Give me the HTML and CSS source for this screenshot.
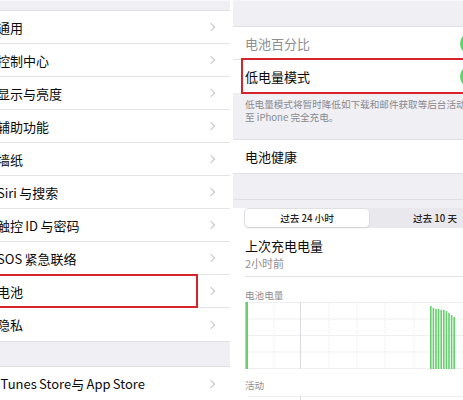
FILE: index.html
```html
<!DOCTYPE html>
<html lang="zh-CN">
<head>
  <meta charset="UTF-8">
  <meta name="viewport" content="width=device-width, initial-scale=1.0">
  <title>设置 - 电池</title>
  <link rel="stylesheet" href="styles.css">
</head>
<body>
  <div class="screen">
    <!-- settings list -->
    <div class="panel panel-left">
      <div class="band band-top"></div>
      <div class="group">
        <div class="row"><span class="label">通用</span><span class="chev"></span></div>
        <div class="row"><span class="label">控制中心</span><span class="chev"></span></div>
        <div class="row"><span class="label">显示与亮度</span><span class="chev"></span></div>
        <div class="row"><span class="label">辅助功能</span><span class="chev"></span></div>
        <div class="row"><span class="label">墙纸</span><span class="chev"></span></div>
        <div class="row"><span class="label">Siri 与搜索</span><span class="chev"></span></div>
        <div class="row"><span class="label">触控 ID 与密码</span><span class="chev"></span></div>
        <div class="row"><span class="label">SOS 紧急联络</span><span class="chev"></span></div>
        <div class="row row-marked"><span class="label">电池</span><span class="chev"></span><div class="mark mark-left"></div></div>
        <div class="row"><span class="label">隐私</span><span class="chev"></span></div>
      </div>
      <div class="band band-mid"></div>
      <div class="group">
        <div class="row"><span class="label">iTunes Store与 App Store</span><span class="chev"></span></div>
      </div>
    </div>

    <!-- battery page -->
    <div class="panel panel-right">
      <div class="band band-right-top"></div>
      <div class="group">
        <div class="row row-r"><span class="label label-dim">电池百分比</span><span class="switch"></span></div>
        <div class="row row-r row-marked"><span class="label">低电量模式</span><span class="switch"></span><div class="mark mark-right"></div></div>
      </div>
      <div class="footnote">低电量模式将暂时降低如下载和邮件获取等后台活动，直<br>至 iPhone 完全充电。</div>
      <div class="group">
        <div class="row row-r"><span class="label">电池健康</span></div>
      </div>
      <div class="band band-gap"></div>
      <div class="usage">
        <div class="segmented">
          <div class="seg seg-on">过去 24 小时</div>
          <div class="seg">过去 10 天</div>
        </div>
        <div class="usage-head">
          <div class="usage-title">上次充电电量</div>
          <div class="usage-sub">2小时前</div>
        </div>
        <div class="chart-label">电池电量</div>
        <svg class="chart" width="218" height="67" viewBox="0 0 218 67">
          <g stroke="#efeff1" stroke-width="1">
            <line x1="3" y1="0.5" x2="218" y2="0.5"/>
            <line x1="3" y1="17" x2="218" y2="17"/>
            <line x1="3" y1="33.5" x2="218" y2="33.5"/>
            <line x1="3" y1="50" x2="218" y2="50"/>
            <line x1="3" y1="66.5" x2="218" y2="66.5"/>
          </g>
          <g stroke="#efeff1" stroke-width="1" stroke-dasharray="2 1">
            <line x1="29" y1="0" x2="29" y2="67"/>
            <line x1="84" y1="0" x2="84" y2="67"/>
            <line x1="112" y1="0" x2="112" y2="67"/>
            <line x1="140" y1="0" x2="140" y2="67"/>
            <line x1="169" y1="0" x2="169" y2="67"/>
            <line x1="197" y1="0" x2="197" y2="67"/>
          </g>
          <line x1="55.5" y1="0" x2="55.5" y2="67" stroke="#dadade" stroke-width="1"/>
          <g fill="#66cf6d">
            <rect x="0.4" y="0" width="2.6" height="67"/>
            <rect x="185" y="4" width="1.6" height="63"/>
            <rect x="187.6" y="6" width="1.6" height="61"/>
            <rect x="190.2" y="7" width="1.6" height="60"/>
            <rect x="192.8" y="7" width="1.6" height="60"/>
            <rect x="195.4" y="8" width="1.6" height="59"/>
            <rect x="198" y="8" width="1.6" height="59"/>
            <rect x="200.6" y="9" width="1.6" height="58"/>
            <rect x="203.2" y="11" width="1.6" height="56"/>
            <rect x="205.8" y="13" width="1.6" height="54"/>
            <rect x="208.4" y="15" width="1.6" height="52"/>
          </g>
        </svg>
        <div class="chart-label chart-label-2">活动</div>
        <svg class="chart" width="218" height="8" viewBox="0 0 218 8">
          <line x1="3" y1="4.5" x2="218" y2="4.5" stroke="#efeff1" stroke-width="1"/>
          <line x1="55.5" y1="4" x2="55.5" y2="8" stroke="#dadade" stroke-width="1"/>
        </svg>
      </div>
    </div>
  </div>
</body>
</html>
```

FILE: styles.css
```css
body {
  margin: 0;
  background-color: #fff;
  font-family: "Noto Sans CJK SC", "Noto Sans", sans-serif;
  color: #0a0a0a;
}

.screen {
  display: flex;
  gap: 3px;
  width: 463px;
  height: 400px;
  overflow: hidden;
}

.panel {
  height: 400px;
  overflow: hidden;
  background-color: #efeff4;
}

.panel-left {
  width: 230px;
  flex: none;
}

.panel-right {
  flex: 1;
  min-width: 0;
}

.band {
  box-sizing: border-box;
  border-bottom: 1px solid #e0e0e4;
}

.band-top {
  height: 11px;
  border-top: 1px solid #f8f8fa;
}

.band-mid {
  height: 26px;
  border-top: 1px solid #e0e0e4;
}

.band-right-top {
  height: 27px;
  border-top: 1px solid #f8f8fa;
}

.band-gap {
  height: 27px;
  border-top: 1px solid #e0e0e4;
}

.group {
  background-color: #fff;
}

.row {
  position: relative;
  box-sizing: border-box;
  display: flex;
  align-items: center;
  justify-content: space-between;
  height: 33px;
  padding-right: 14px;
  border-bottom: 1px solid #e3e3e6;
  font-size: 13px;
}

.row:last-child {
  border-bottom: none;
}

.label {
  margin-left: -3px;
  white-space: nowrap;
  word-spacing: -0.6px;
}

.chev {
  width: 5px;
  height: 5px;
  margin-right: 2px;
  border-top: 1.3px solid #c5c5ca;
  border-right: 1.3px solid #c5c5ca;
  transform: rotate(45deg);
}

.row-r {
  padding-left: 12px;
  padding-right: 0;
}

.row-r .label {
  margin-left: 0;
}

.label-dim {
  color: #8e8e93;
}

.switch {
  flex: none;
  width: 38px;
  height: 23px;
  margin-right: -35px;
  border-radius: 12px;
  background-color: #5bd66a;
}

.mark {
  position: absolute;
  top: -1px;
  bottom: -1px;
  box-sizing: border-box;
  border: 2px solid #d7232b;
}

.mark-left {
  left: -4px;
  width: 202px;
}

.mark-right {
  top: -2px;
  left: 8px;
  right: -6px;
}

.footnote {
  box-sizing: border-box;
  height: 47px;
  padding: 5px 0 0 12px;
  border-bottom: 1px solid #e0e0e4;
  font-size: 9.6px;
  line-height: 13px;
  color: #8a8a8f;
  white-space: nowrap;
}

.usage {
  height: 200px;
  padding-left: 12px;
  background-color: #fff;
}

.segmented {
  display: flex;
  width: 258px;
  height: 20px;
  margin: 8px 0 0 -1px;
  padding: 1px;
  box-sizing: border-box;
  border-radius: 5px;
  background-color: #e8e8ed;
}

.seg {
  flex: 1;
  display: flex;
  align-items: center;
  justify-content: center;
  font-size: 9.6px;
  font-weight: 500;
  color: #222;
}

.seg-on {
  flex: none;
  width: 124px;
  border-radius: 4px;
  background-color: #fff;
  box-shadow: 0 0 0 0.5px #d8d8dc, 0 1px 2px rgba(0, 0, 0, 0.12);
}

.usage-head {
  padding: 10px 0 6px;
  border-bottom: 1px solid #e5e5e8;
}

.usage-title {
  font-size: 13px;
  line-height: 16px;
}

.usage-sub {
  margin-top: 2px;
  font-size: 11px;
  line-height: 14px;
  color: #8e8e93;
}

.chart-label {
  margin-top: 12px;
  font-size: 9.6px;
  line-height: 13px;
  color: #8e8e93;
}

.chart-label-2 {
  margin-top: 10px;
}

.chart {
  display: block;
}
```
